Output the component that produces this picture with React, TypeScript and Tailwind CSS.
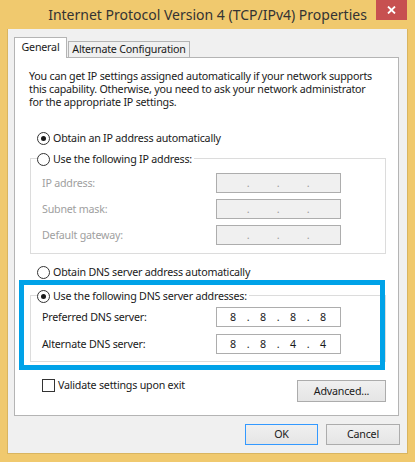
import React from "react";

const font = { fontFamily: '"Noto Sans", "Open Sans", sans-serif' };

function Radio({ checked }: { checked?: boolean }) {
  return (
    <span className="w-[13px] h-[13px] rounded-full border border-[#333333] bg-white flex items-center justify-center shrink-0">
      {checked && <span className="w-[5px] h-[5px] rounded-full bg-[#1a1a1a]" />}
    </span>
  );
}

function IpField({ values, disabled }: { values?: string[]; disabled?: boolean }) {
  return (
    <div
      className={`w-[125px] h-[20px] border border-[#adadad] flex items-center pl-[3px] ${
        disabled ? "bg-[#f0f0f0] text-[#9a9a9a]" : "bg-white text-[#1a1a1a]"
      }`}
    >
      {[0, 1, 2, 3].map((i) => (
        <React.Fragment key={i}>
          {i > 0 && <span className="w-[4px] text-center leading-none">.</span>}
          <span className="w-[26px] text-center leading-none">{values ? values[i] : ""}</span>
        </React.Fragment>
      ))}
    </div>
  );
}

function Row({ label, values, disabled }: { label: string; values?: string[]; disabled?: boolean }) {
  return (
    <div className="flex items-center h-[20px]">
      <span className={`w-[174px] ${disabled ? "text-[#a0a0a0]" : "text-[#1a1a1a]"}`}>{label}</span>
      <IpField values={values} disabled={disabled} />
    </div>
  );
}

export default function App() {
  return (
    <div
      className="w-[415px] h-[462px] bg-[#f0c96e] flex flex-col text-[10.7px] tracking-[-0.22px] text-[#1a1a1a] overflow-hidden"
      style={font}
    >
      {/* Title bar */}
      <div className="relative h-[29px] flex items-center justify-center shrink-0">
        <span className="text-[14px] tracking-normal text-[#333333] -mt-[1px]">
          Internet Protocol Version 4 (TCP/IPv4) Properties
        </span>
        <div className="absolute top-0 right-[8px] w-[31px] h-[20px] bg-[#c75050] flex items-center justify-center">
          <svg width="9" height="8" viewBox="0 0 9 8">
            <path d="M1 0.5 L8 7.5 M8 0.5 L1 7.5" stroke="white" strokeWidth="1.8" />
          </svg>
        </div>
      </div>

      {/* Client area */}
      <div className="ml-[7px] w-[401px] h-[425px] bg-[#f0f0f0] border-l border-r border-b border-[#d9b560] flex flex-col">
        {/* Tabs */}
        <div className="flex items-end pl-[6px] pt-[8px] h-[28px]">
          <div className="relative z-10 w-[53px] h-[21px] -mb-[1px] bg-white border-l border-t border-r border-[#b4b4b4] flex items-center justify-center pb-[2px] whitespace-nowrap">
            General
          </div>
          <div className="ml-[1px] w-[122px] h-[16px] bg-[#f0f0f0] border-l border-t border-r border-[#b4b4b4] flex items-center justify-center whitespace-nowrap">
            Alternate Configuration
          </div>
        </div>

        {/* Panel */}
        <div className="relative ml-[6px] w-[385px] h-[359px] bg-white border border-[#b4b4b4] flex flex-col">
          <div className="pl-[14px] pt-[12px] leading-[13px] whitespace-nowrap">
            You can get IP settings assigned automatically if your network supports
            <br />
            this capability. Otherwise, you need to ask your network administrator
            <br />
            for the appropriate IP settings.
          </div>

          <div className="ml-[22px] mt-[21px] h-[16px] flex items-center gap-[3px]">
            <Radio checked />
            <span>Obtain an IP address automatically</span>
          </div>

          {/* Group 1 */}
          <div className="ml-[15px] mt-[12px] w-[356px] h-[96px] border border-[#dcdcdc] flex flex-col">
            <div className="-mt-[8px] ml-[6px] h-[16px] self-start bg-white pr-[2px] flex items-center gap-[3px]">
              <Radio />
              <span>Use the following IP address:</span>
            </div>
            <div className="pl-[11px] mt-[6px] flex flex-col gap-[6px]">
              <Row label="IP address:" disabled />
              <Row label="Subnet mask:" disabled />
              <Row label="Default gateway:" disabled />
            </div>
          </div>

          <div className="ml-[22px] mt-[10px] h-[16px] flex items-center gap-[3px]">
            <Radio />
            <span>Obtain DNS server address automatically</span>
          </div>

          {/* Group 2 */}
          <div className="ml-[15px] mt-[15px] w-[356px] h-[67px] border border-[#dcdcdc] flex flex-col">
            <div className="-mt-[8px] ml-[6px] h-[16px] self-start bg-white pr-[2px] flex items-center gap-[3px]">
              <Radio checked />
              <span>Use the following DNS server addresses:</span>
            </div>
            <div className="pl-[11px] mt-[3px] flex flex-col gap-[7px]">
              <Row label="Preferred DNS server:" values={["8", "8", "8", "8"]} />
              <Row label="Alternate DNS server:" values={["8", "8", "4", "4"]} />
            </div>
          </div>

          {/* Highlight */}
          <div className="absolute left-[4px] top-[222px] w-[366px] h-[90px] border-[5px] border-[#00a2e8] pointer-events-none" />

          {/* Bottom row */}
          <div className="mt-[15px] pl-[27px] pr-[12px] flex justify-between items-start">
            <div className="h-[16px] flex items-center gap-[3px]">
              <span className="w-[13px] h-[13px] border border-[#333333] bg-white shrink-0" />
              <span>Validate settings upon exit</span>
            </div>
            <button className="mt-[3px] w-[89px] h-[22px] border border-[#acacac] bg-gradient-to-b from-[#f0f0f0] to-[#e5e5e5] flex items-center justify-center">
              Advanced...
            </button>
          </div>
        </div>

        {/* Dialog buttons */}
        <div className="mt-[8px] pr-[7px] flex justify-end gap-[8px]">
          <button className="w-[73px] h-[21px] border border-[#3399ff] bg-gradient-to-b from-[#f0f0f0] to-[#e5e5e5] flex items-center justify-center">
            OK
          </button>
          <button className="w-[74px] h-[21px] border border-[#acacac] bg-gradient-to-b from-[#f0f0f0] to-[#e5e5e5] flex items-center justify-center">
            Cancel
          </button>
        </div>
      </div>
    </div>
  );
}
